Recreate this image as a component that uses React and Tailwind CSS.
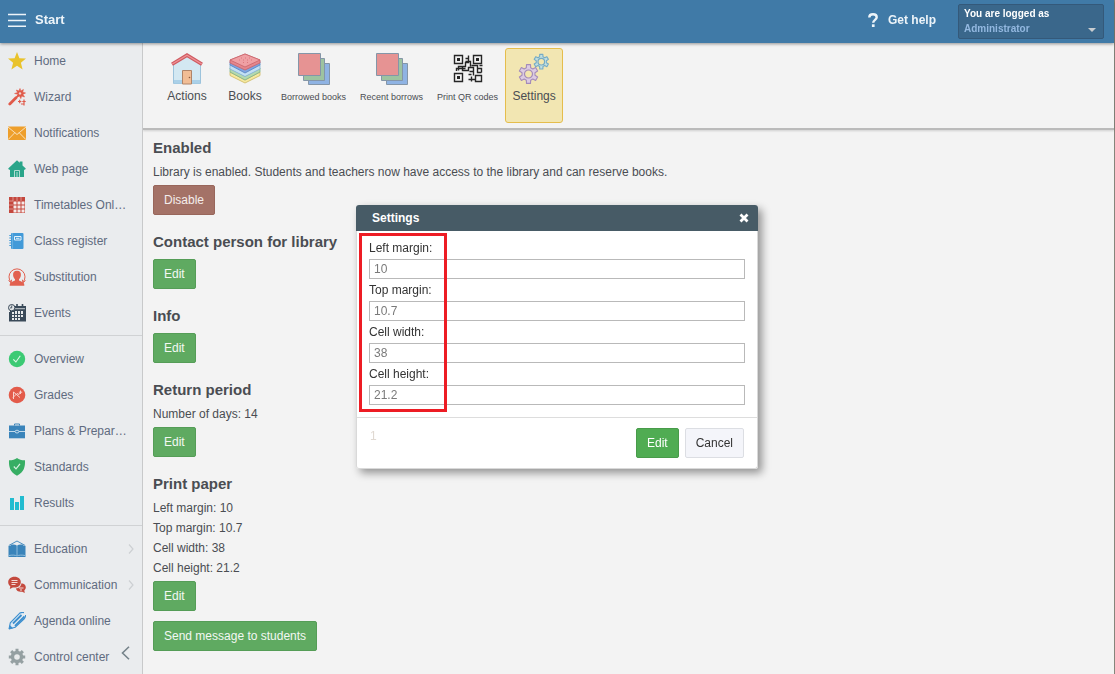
import React from "react";

const SERIES = { viewBox: "0 0 18 18", className: "h-[18px] w-[18px] shrink-0" };

const icons = {
  home: (
    <svg {...SERIES}>
      <path fill="#e9c32c" d="M9 0l2.4 6.2 6.6.4-5.1 4.2 1.7 6.6L9 13.8l-5.6 3.6 1.7-6.6L0 6.6l6.6-.4z" />
    </svg>
  ),
  wizard: (
    <svg {...SERIES} fill="none" stroke="#e05a4a">
      <path strokeWidth="2.8" strokeLinecap="round" d="M1.8 16L8 9.8" />
      <path strokeWidth="1.8" d="M8.6 9.2L11 6.8" />
      <path fill="#e05a4a" strokeWidth=".6" d="M12 .5l.8 2.6L15.4 1.5 14.7 4.2 17.5 5l-2.6 1.2L16.5 9l-2.9-1-.8 2.6-1.300-2.5-2.5.6 1-2.4-3.400-.8 3-.9L8.4 2l2.6 1z" />
      <circle cx="12" cy="5.4" r="1.2" fill="#f0d5d2" stroke="none" />
      <path strokeWidth="1.2" d="M10 13.5h3.4M11.7 11.8v3.4M14.3 13.5h3.4M16 11.500v6M13 16h2.5" />
    </svg>
  ),
  mail: (
    <svg {...SERIES}>
      <path fill="#ee9f2b" d="M0 2.500h18v13.500H0z" />
      <path fill="none" stroke="#fbe8c8" strokeWidth=".9" d="M0 3l9 7.5L18 3M0 15.700l6.8-7M18 15.700l-6.8-7" />
    </svg>
  ),
  web: (
    <svg {...SERIES}>
      <path fill="#2aa58a" d="M9 .3l2.700 2.500V1.500h2.800v4l3.300 3-.8 1.200H16V17H2V9.700H1L.2 8.500z" />
      <path fill="none" stroke="#bfe3da" strokeWidth=".9" d="M6.500 17v-6.500h5V17M9 12v5" />
    </svg>
  ),
  timetable: (
    <svg {...SERIES}>
      <path fill="#c4473d" d="M1 1h16v16H1z" />
      <path stroke="#e3a7a2" strokeWidth=".8" d="M5 1v4M9 1v4M13 1v4M1 5h4M1 9h4M1 13h4" />
      <path fill="#f5e9e8" d="M5.500 5.500h3v3h-3zM9.500 5.500h3v3h-3zM13.500 5.500h3v3h-3zM5.500 9.500h3v3h-3zM9.500 9.500h3v3h-3zM13.500 9.500h3v3h-3zM5.500 13.500h3v3h-3zM9.500 13.500h3v3h-3zM13.500 13.500h3v3h-3z" />
    </svg>
  ),
  register: (
    <svg {...SERIES}>
      <rect x="3" y="1" width="12.5" height="16" rx="1" fill="#429ad8" />
      <path stroke="#429ad8" strokeWidth="1.2" d="M1.300 3.500h2M1.300 6h2M1.300 8.500h2M1.300 11h2M1.300 13.500h2" />
      <path fill="none" stroke="#e5f2fb" strokeWidth="1" d="M6.500 4.500h6.500v3.500H6.500zM8 6.300h3.500" />
      <path stroke="#7cbbe7" strokeWidth=".7" d="M4.600 1v16" />
    </svg>
  ),
  substitution: (
    <svg {...SERIES}>
      <path fill="none" stroke="#e2604f" strokeWidth="1" d="M3.300 14.500A8 8 0 1 1 14.700 14.500M.500 12.500l2.500 2.200.6-3M17.500 12.500L15 14.700l-.6-3" />
      <path fill="#e2604f" d="M9 2.800c3 0 4.200 2 3.900 4.500-.2 1.700-.9 3-1.900 4v1.300c1.500.8 4.200 1.300 5 3 .3.700.3 1.500.3 2.200H1.700c0-.700 0-1.500.3-2.200.8-1.700 3.500-2.200 5-3v-1.300c-1-1-1.700-2.300-1.900-4C4.800 4.800 6 2.800 9 2.800z" />
    </svg>
  ),
  events: (
    <svg {...SERIES}>
      <path fill="#3a4a59" d="M2 2h16v15.500H1V8h1z" />
      <path stroke="#3a4a59" strokeWidth="1.6" d="M9 0v3M14.500 0v3" />
      <path stroke="#e9ebec" strokeWidth=".8" d="M7 4.700h10" />
      <path fill="#e9ebec" d="M4 8h2v2H4zM7 7h2v3H7zM10 7h2v3h-2zM13 7h2v3h-2zM4 11h2v2H4zM7 11h2v2H7zM10 11h2v2h-2zM13 11h2v2h-2zM7 14h2v2H7zM10 14h2v2h-2zM4 14h2v2H4z" />
      <circle cx="3.7" cy="3.7" r="3.2" fill="#e2e5e7" stroke="#3a4a59" />
      <path fill="none" stroke="#3a4a59" strokeWidth=".9" d="M3.700 1.500v2.400H2" />
    </svg>
  ),
  overview: (
    <svg {...SERIES}>
      <circle cx="9" cy="9" r="8.2" fill="#3cca74" />
      <path fill="none" stroke="#dff7e8" strokeWidth="1.1" d="M5.300 9.300l2.600 2.700 4.400-6.200" />
    </svg>
  ),
  grades: (
    <svg {...SERIES}>
      <circle cx="9" cy="9" r="8.3" fill="#e35b4a" />
      <path fill="none" stroke="#f8d3ce" strokeWidth="1" d="M5.500 13V6l6.500 5.500M5 11.500l4-4 2 1 1.500-2M12.500 4.500v3.500M10.800 6.200h3.400" />
    </svg>
  ),
  plans: (
    <svg {...SERIES}>
      <path fill="none" stroke="#3a84ba" strokeWidth="1" d="M6.500 3.500v-1.500h5v1.500" />
      <path fill="#3a84ba" d="M1 3.500h16v12.800H1z" />
      <path fill="none" stroke="#d2e4f0" strokeWidth=".9" d="M1 9.500h6M11 9.500h6" />
      <ellipse cx="9" cy="9.6" rx="1.9" ry="1.4" fill="#3a84ba" stroke="#d2e4f0" strokeWidth=".9" />
    </svg>
  ),
  standards: (
    <svg {...SERIES}>
      <path fill="#37ae64" d="M9 0c2 1.500 5 2.400 8 2.300.3 6.500-1 12-8 15.500C2 14.300.7 8.800 1 2.300 4 2.400 7 1.500 9 0z" />
      <path fill="none" stroke="#d9f1e2" strokeWidth="1.2" d="M5.800 8.500L8 10.800l4-5" />
    </svg>
  ),
  results: (
    <svg {...SERIES} fill="#22bcd0">
      <path d="M2 4h4v12H2zM7 8h4v8H7zM12 2h4v14h-4z" />
    </svg>
  ),
  education: (
    <svg {...SERIES}>
      <path fill="none" stroke="#3a84ba" strokeWidth=".9" d="M.8 5.500L9 1l8.200 4.500" />
      <path fill="#3a84ba" d="M2.500 5C5 4.300 7.500 4.600 9 5.700c1.500-1.100 4-1.400 6.500-.7v1h2v11h-17V6h2z" />
      <path stroke="#a5cae3" strokeWidth=".8" fill="none" d="M9 5.700V15M1 15.500c3-.6 6-.5 8 .4 2-.900 5-1 8-.4" />
    </svg>
  ),
  communication: (
    <svg {...SERIES}>
      <path fill="#c44a3e" d="M6.500.8c4 0 6.300 2.500 6.300 5.400s-2.500 5.400-6.300 5.400c-.6 0-1.200 0-1.700-.2L1.800 13l.5-2.700C1 9.300.2 7.800.2 6.200.2 3.300 2.700.8 6.500.8z" />
      <path fill="#c44a3e" d="M13.500 7.300c2.600.2 4.300 1.900 4.300 4 0 1.300-.6 2.400-1.500 3.100l.5 2.500-2.600-1.200c-3.200.6-6-.9-6.300-3.200 3 0 5.200-2.100 5.600-5.200z" />
      <path stroke="#f3dad7" strokeWidth="1" d="M3.500 4.500h6M3.500 6.500h6M3.500 8.500h4M11 12h4.500M12 14h2" />
    </svg>
  ),
  agenda: (
    <svg {...SERIES}>
      <path fill="#dbe9f5" stroke="#3d8fce" strokeWidth="1.1" d="M1 17l1.300-6.200L11.500 1.300C13 .3 14.500.3 16 .6M17.600 3c0 2-.600 3-1.600 4L7.200 15.300 1 17" />
      <path stroke="#3d8fce" strokeWidth="1.8" d="M5 11.500L13.500 3M7 14l9.500-9.500" />
      <path fill="#3d8fce" d="M.8 17.300l1-4.300 3.300 3.200z" />
    </svg>
  ),
  control: (
    <svg {...SERIES}>
      <g fill="#95a0a2">
        <path d="M7.500.8h3v16.400h-3zM.8 7.500h16.400v3H.8z" />
        <path d="M2.100 4.200l2.100-2.100 11.700 11.700-2.100 2.100zM13.800 2.100l2.100 2.100L4.200 15.900l-2.100-2.100z" />
        <circle cx="9" cy="9" r="6.2" />
      </g>
      <circle cx="9" cy="9" r="2.8" fill="#e9ebec" />
    </svg>
  ),
};

const groups = [
  [
    ["home", "Home"],
    ["wizard", "Wizard"],
    ["mail", "Notifications"],
    ["web", "Web page"],
    ["timetable", "Timetables Onl…"],
    ["register", "Class register"],
    ["substitution", "Substitution"],
    ["events", "Events"],
  ],
  [
    ["overview", "Overview"],
    ["grades", "Grades"],
    ["plans", "Plans & Prepar…"],
    ["standards", "Standards"],
    ["results", "Results"],
  ],
  [
    ["education", "Education", true],
    ["communication", "Communication", true],
    ["agenda", "Agenda online"],
    ["control", "Control center"],
  ],
];

function Sidebar() {
  return (
    <nav className="relative w-[143px] shrink-0 overflow-hidden border-r border-[#c8c9ca] bg-[#eaecee]">
      {groups.map((items, g) => (
        <ul key={g} className={g ? "mt-1 border-t border-[#d0d2d4] pt-[5px]" : ""}>
          {items.map(([icon, label, more]) => (
            <li key={label}>
              <a href="#" className="flex h-9 items-center gap-2 px-2 text-[#5f6b80]">
                {icons[icon]}
                <span className="grow whitespace-nowrap">{label}</span>
                {more && (
                  <svg viewBox="0 0 6 10" className="h-[10px] w-[6px] shrink-0">
                    <path d="M1 .5l4 4.500-4 4.500" fill="none" stroke="#cdd0d3" strokeWidth="1.2" />
                  </svg>
                )}
              </a>
            </li>
          ))}
        </ul>
      ))}
      <button type="button" aria-label="Collapse menu" className="absolute right-3 bottom-[14px]">
        <svg viewBox="0 0 9 14" className="block h-[14px] w-[9px]">
          <path d="M8 .7L1.500 7 8 13.300" fill="none" stroke="#76838a" strokeWidth="1.6" />
        </svg>
      </button>
    </nav>
  );
}

const Stack = () => (
  <svg viewBox="0 0 34 34" className="h-[34px] w-[34px]" stroke="#8496a8">
    <path fill="#8fb3e3" d="M11.500 11.500h21v21h-21z" />
    <path fill="#9dc3a0" d="M6.500 6.500h21v22h-21z" />
    <path fill="#e69393" d="M1.500 1.500h22v22h-22z" />
  </svg>
);

const Actions = () => (
  <svg viewBox="0 0 34 34" className="h-[34px] w-[34px]">
    <path fill="#d3e8f2" stroke="#9cc3dc" d="M3.500 31.500V11L17 3l13.500 8v20.500z" />
    <path fill="#aad0e8" d="M4 28h26v3.500H4z" />
    <path fill="#f1bd95" stroke="#b08468" d="M12.500 18.500h9v13.500h-9z" />
    <circle cx="19.5" cy="25.5" r=".8" fill="#8d5b3e" />
    <path fill="none" stroke="#cf5b62" strokeWidth="3.6" d="M2 12.300L17 3.200l15 9.100" />
    <path fill="none" stroke="#ef9295" strokeWidth="1.4" d="M2.300 12L17 3.200 31.700 12" />
  </svg>
);

const Books = () => (
  <svg viewBox="0 0 34 34" className="h-[34px] w-[34px]" strokeWidth=".8">
    <path fill="#f6e9a0" stroke="#cdb75f" d="M2 20l15 8 15-8v3.500L17 31 2 23.500z" />
    <path fill="#b5d9ae" stroke="#7db188" d="M2 16l15 8 15-8v4L17 28 2 20z" />
    <path fill="#c3e0f3" stroke="#7fafd3" d="M2 12.500l15 8 15-8V17l-15 7.500L2 17z" />
    <path fill="#7da6e2" stroke="#5d85c4" d="M2 9.500l15 8 15-8v3.500l-15 8-15-8z" />
    <path fill="#e5878c" stroke="#c9636b" d="M2 8l15-6 15 6v3l-15 7-15-7z" />
    <path fill="#efa0a4" stroke="#c9636b" d="M2 8l15-6 15 6-15 7z" />
    <path stroke="#d56d74" strokeDasharray="1 3" d="M11 8h14M13 6h10M15 10.500h7" />
  </svg>
);

const Qr = () => (
  <svg viewBox="0 0 34 34" className="h-[34px] w-[34px]" fill="none" stroke="#262626" strokeWidth="1.4">
    <path d="M3.500 3.500h8v8h-8zM22.500 3.500h8v8h-8zM3.500 21.500h8v8h-8z" />
    <path d="M24.500 23.500h6v6h-6zM14.500 6.500h3v-3M17.500 6.500v4h-3v4h-7v4M14.500 9.500h5v5M5.500 19v-2.500h9M11.500 14.500v4h6v-3h5v4h-4M20.500 13.500h6v3h4v4M26.500 16.500v4h4M28.500 13.500h3M22.500 19.500v4M17.500 22.500h3M17.500 27.500h7M20.500 24.500v5" />
    <path fill="#262626" stroke="none" d="M6 6h3v3H6zM25 6h3v3h-3zM6 24h3v3H6z" />
  </svg>
);

const gearPath = Array.from({ length: 6 }, (_, k) =>
  [
    [-19, 6.6],
    [-12, 9.6],
    [12, 9.6],
    [19, 6.6],
  ]
    .map(([offset, radius]) => {
      const angle = ((k * 60 - 90 + offset) * Math.PI) / 180;
      return `${(radius * Math.cos(angle)).toFixed(2)} ${(radius * Math.sin(angle)).toFixed(2)}`;
    })
    .join("L")
).join("L");

const Gears = () => (
  <svg viewBox="0 0 34 34" className="h-[34px] w-[34px]" strokeLinejoin="round">
    <g transform="translate(11.5 22)">
      <path d={`M${gearPath}Z`} fill="#dccbe2" stroke="#a48cba" strokeWidth="1.1" />
      <circle r="4" fill="#f3e6ae" stroke="#a48cba" strokeWidth="1.2" />
    </g>
    <g transform="translate(24.300 9.700) scale(.78)">
      <path d={`M${gearPath}Z`} fill="#c2dfdf" stroke="#75abc5" strokeWidth="1.4" />
      <circle r="4.2" fill="#f3e6ae" stroke="#75abc5" strokeWidth="1.5" />
    </g>
  </svg>
);

function Tool({ icon, label, small, active }) {
  return (
    <button
      type="button"
      className={`flex h-[75px] min-w-[58px] flex-col items-center gap-px rounded-[3px] border px-[6px] pt-[3px] ${
        active ? "border-[#e5bd4c] bg-[#f2e6b2]" : "border-transparent"
      }`}
    >
      {icon}
      <span className={small ? "text-[9px] leading-5" : "text-[12px] leading-[18px]"}>{label}</span>
    </button>
  );
}

function Button({ children, tone = "green" }) {
  const tones = {
    green: "border-[#559d57] bg-[#5faa61] text-[#f3f8f3]",
    red: "border-[#98665b] bg-[#a47267] text-[#f4eeec]",
    bright: "border-[#489b4a] bg-[#50ac53] text-white",
    plain: "border-[#dcdee3] bg-[#f4f5fa] text-[#333333]",
  };
  return (
    <button type="button" className={`h-[30px] rounded-[2px] border px-[10px] ${tones[tone]}`}>
      {children}
    </button>
  );
}

function Section({ title, lines = [], children }) {
  return (
    <section className="mb-[18px] flex flex-col">
      <h2 className="mb-[5px] text-[15px] leading-[18px] font-bold text-[#4a4d52]">{title}</h2>
      {lines.map((line) => (
        <p key={line} className="leading-5">
          {line}
        </p>
      ))}
      <div className="mt-[3px] flex flex-col items-start gap-[10px]">{children}</div>
    </section>
  );
}

const fields = [
  ["left", "Left margin:", "10"],
  ["top", "Top margin:", "10.7"],
  ["width", "Cell width:", "38"],
  ["height", "Cell height:", "21.2"],
];

function SettingsDialog() {
  return (
    <div className="fixed inset-0 flex items-center justify-center pr-px">
      <form
        role="dialog"
        aria-labelledby="dialog-title"
        className="w-[402px] rounded-[3px] bg-white text-[#333333] shadow-[4px_4px_8px_rgba(0,0,0,0.4)]"
      >
        <header className="flex h-[26px] items-center justify-between rounded-t-[3px] bg-[#475b66] pr-[9px] pl-4 text-white">
          <h2 id="dialog-title" className="font-bold">
            Settings
          </h2>
          <button type="button" aria-label="Close">
            <svg viewBox="0 0 10 10" className="h-[10px] w-[10px]">
              <path d="M1.500 1.500l7 7M8.500 1.500l-7 7" stroke="#fff" strokeWidth="2.8" />
            </svg>
          </button>
        </header>
        <div className="rounded-b-[3px] border-x border-b border-[#d9d9d9]">
          <div className="relative border-b border-[#dddddd] px-3 pt-[7px] pb-[11px]">
            {fields.map(([id, label, value]) => (
              <div key={id} className="pb-px">
                <label htmlFor={id} className="block h-[21px] leading-5">
                  {label}
                </label>
                <input
                  id={id}
                  defaultValue={value}
                  className="block h-5 w-full border border-[#b9b9b9] bg-transparent px-1 text-[#7a7a7a]"
                />
              </div>
            ))}
            <div className="pointer-events-none absolute top-[2px] bottom-[5px] left-[2px] w-[88px] border-[3px] border-[#ed1c24]" />
          </div>
          <footer className="flex justify-end gap-[6px] px-[13px] py-[10px]">
            <span className="grow text-[#e0d9d2]">1</span>
            <Button tone="bright">Edit</Button>
            <Button tone="plain">Cancel</Button>
          </footer>
        </div>
      </form>
    </div>
  );
}

export default function App() {
  return (
    <div className="flex h-screen flex-col border-r border-[#85857b] bg-[#f3f3f3] font-['Liberation_Sans',Arial,sans-serif] text-[12px] leading-4 text-[#4a4d52]">
      <header className="z-10 flex h-[43px] shrink-0 items-center bg-[#407aa7] pr-[10px] pl-2 text-white shadow-[0_1px_3px_rgba(0,0,0,0.4)]">
        <button type="button" className="flex items-center gap-[9px] pb-[3px] text-[13px] font-bold text-[#edf4f9]">
          <svg viewBox="0 0 18 14" className="h-[14px] w-[18px]">
            <path d="M0 1.500h18M0 7.500h18M0 13.200h18" stroke="#edf4f9" strokeWidth="1.6" />
          </svg>
          Start
        </button>
        <a href="#" className="ml-auto flex items-center gap-[10px] pb-[3px] text-[12px] font-bold text-[#edf4f9]">
          <svg viewBox="0 0 10 14" className="h-[14px] w-[10px]">
            <path d="M1.300 4.500C1.300 2.500 2.800 1.300 5 1.300s3.700 1.200 3.700 3C8.700 6.800 5.200 7 5.200 9.800" fill="none" stroke="#edf4f9" strokeWidth="2.4" />
            <path d="M3.900 11.300h2.700V14H3.900z" fill="#edf4f9" />
          </svg>
          Get help
        </a>
        <button
          type="button"
          className="ml-[22px] flex h-[35px] w-[146px] items-end justify-between rounded-[2px] border border-[#34597a] bg-[#3a678b] pr-[7px] pb-[2px] pl-[5px] text-left font-bold"
        >
          <span className="text-[10px] leading-[15px]">
            You are logged as
            <span className="block text-[#93b8e0]">Administrator</span>
          </span>
          <svg viewBox="0 0 8 4" className="mb-1 h-1 w-2">
            <path d="M0 0h8L4 4z" fill="#c9cdd0" />
          </svg>
        </button>
      </header>
      <div className="flex min-h-0 grow">
        <Sidebar />
        <main className="flex min-w-0 grow flex-col">
          <div className="flex shrink-0 border-b-2 border-[#bababa] px-[15px] pt-[5px] pb-[5px] shadow-[0_1px_2px_rgba(0,0,0,0.15)]">
            <Tool icon={<Actions />} label="Actions" />
            <Tool icon={<Books />} label="Books" />
            <Tool small icon={<Stack />} label="Borrowed books" />
            <Tool small icon={<Stack />} label="Recent borrows" />
            <Tool small icon={<Qr />} label="Print QR codes" />
            <Tool active icon={<Gears />} label="Settings" />
          </div>
          <div className="min-h-0 grow overflow-hidden px-[10px] pt-[9px]">
            <Section title="Enabled" lines={["Library is enabled. Students and teachers now have access to the library and can reserve books."]}>
              <Button tone="red">Disable</Button>
            </Section>
            <Section title="Contact person for library">
              <Button>Edit</Button>
            </Section>
            <Section title="Info">
              <Button>Edit</Button>
            </Section>
            <Section title="Return period" lines={["Number of days: 14"]}>
              <Button>Edit</Button>
            </Section>
            <Section title="Print paper" lines={["Left margin: 10", "Top margin: 10.7", "Cell width: 38", "Cell height: 21.2"]}>
              <Button>Edit</Button>
              <Button>Send message to students</Button>
            </Section>
          </div>
        </main>
      </div>
      <SettingsDialog />
    </div>
  );
}
